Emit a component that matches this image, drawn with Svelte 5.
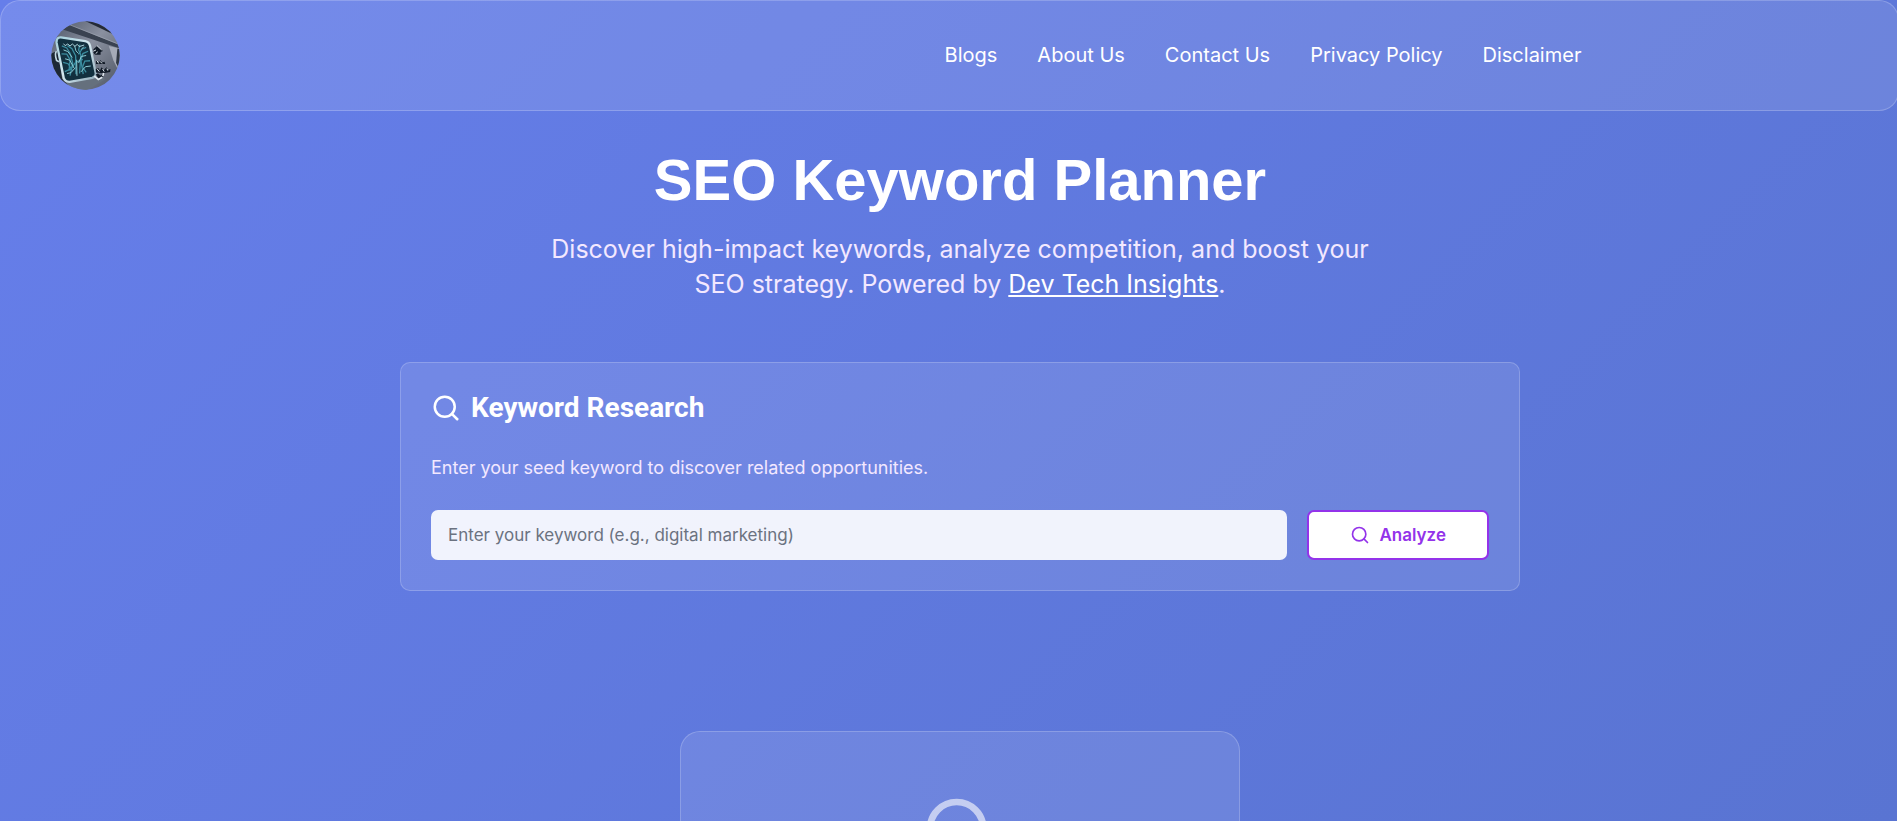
<script lang="ts">
  const navLinks = [
    { label: "Blogs", href: "#blogs" },
    { label: "About Us", href: "#about" },
    { label: "Contact Us", href: "#contact" },
    { label: "Privacy Policy", href: "#privacy" },
    { label: "Disclaimer", href: "#disclaimer" },
  ];

  let keyword = $state("");

  function handleSubmit(event: SubmitEvent) {
    event.preventDefault();
    keyword = keyword.trim();
  }
</script>

{#snippet searchIcon()}
  <svg viewBox="0 0 24 24" aria-hidden="true">
    <circle cx="11" cy="11" r="8" />
    <path d="m21 21-4.3-4.3" />
  </svg>
{/snippet}

<div class="page">
  <header class="site-header">
    <a class="logo" href="#home" aria-label="Home">
      <svg viewBox="0 0 210 210" aria-hidden="true">
        <defs>
          <linearGradient id="wall" x1="0" y1="0" x2="1" y2="1">
            <stop offset="0" stop-color="#4d5667" />
            <stop offset="0.45" stop-color="#8a909f" />
            <stop offset="1" stop-color="#4c5462" />
          </linearGradient>
          <linearGradient id="frame" x1="0" y1="0" x2="1" y2="1">
            <stop offset="0" stop-color="#a5cfdc" />
            <stop offset="0.5" stop-color="#d4e8ef" />
            <stop offset="1" stop-color="#8fa9b8" />
          </linearGradient>
          <clipPath id="round"><circle cx="105" cy="105" r="104" /></clipPath>
        </defs>
        <g clip-path="url(#round)">
          <rect width="210" height="210" fill="url(#wall)" />
          <path d="M36 26 210 84V74L58 12Z" fill="#3a4250" />
          <path d="M58 12 210 72" stroke="#a1a7b3" stroke-width="2" />
          <path d="M104 0 210 50V34L150 0Z" fill="#242b37" />
          <path d="M176 76 210 84V160L190 120Z" fill="#a6abb7" />
          <path d="M202 84 210 86V150L198 128Z" fill="#303844" />
          <path d="M0 100 20 90 34 176 66 210H0Z" fill="#1d2834" />
          <path d="M44 184 132 178 152 158 164 178 110 210H64Z" fill="#65707d" />
          <path
            d="M30 50 104 61Q116 63 119 76L136 158Q138 170 125 173L57 185Q44 186 39 174L17 66Q16 49 30 50Z"
            fill="#12303f"
            stroke="url(#frame)"
            stroke-width="7"
          />
          <path d="M17 92Q10 98 17 120L24 124" fill="none" stroke="#c4d9e2" stroke-width="5" />
          <g fill="none" stroke="#3b8c9f" stroke-width="4">
            <path d="M33 76 48 82 58 98 66 128 58 166M50 75 64 84 75 106 76 162M88 72 84 88 91 104 87 160" />
            <path d="M32 100 48 101 58 118 55 151M37 126 52 130 65 151M113 92 97 99 91 120 98 162" />
            <path d="M107 80 94 86 84 102M119 121 103 122 96 140 107 156M42 154 61 146 75 126 97 117" />
          </g>
          <g fill="none" stroke="#8ccbd4" stroke-width="3">
            <path d="M38 88 51 93 65 111M72 76 76 91 84 99M107 105 92 108 84 128M43 115 57 119 70 143" />
            <path d="M121 137 105 139 91 155M49 160 61 157 74 142M78 118 79 167M100 78 92 87" />
          </g>
          <path
            d="M38 69 43 75 51 70 58 76 65 70 73 77 80 71 86 78 101 73"
            fill="none"
            stroke="#afd4dc"
            stroke-width="3"
          />
          <g fill="#111a26">
            <path d="M129 86 141 75 158 91 151 94V103H134L129 97Z" />
            <path d="M137 120 142 119 145 127 151 119 155 126 163 124 165 131H137Z" />
            <path d="M136 145 144 143 149 151 154 141 161 149 169 141 174 149 181 146 180 155 159 159 137 157Z" />
            <path d="M136 163 146 176 160 168 161 161 150 166 143 160Z" />
          </g>
          <g fill="none" stroke="#e1e8ee" stroke-width="3">
            <path d="M129 92 137 88M140 75 154 88M136 99 142 94M139 119 145 129" />
            <path d="M150 123 155 129M140 145 147 154M157 146 162 154M170 145 173 151" />
            <path d="M132 168 144 178 156 171M160 158 158 168" stroke-width="5" />
          </g>
        </g>
      </svg>
    </a>

    <nav class="nav" aria-label="Main">
      {#each navLinks as link}
        <a href={link.href}>{link.label}</a>
      {/each}
    </nav>
  </header>

  <main class="content">
    <section class="hero">
      <h1>SEO Keyword Planner</h1>
      <p>
        Discover high-impact keywords, analyze competition, and boost your SEO strategy. Powered by
        <a href="#dev-tech-insights">Dev Tech Insights</a>.
      </p>
    </section>

    <section class="card research">
      <h2>{@render searchIcon()}Keyword Research</h2>
      <label for="keyword">Enter your seed keyword to discover related opportunities.</label>
      <form class="search-form" onsubmit={handleSubmit}>
        <input
          id="keyword"
          type="text"
          placeholder="Enter your keyword (e.g., digital marketing)"
          bind:value={keyword}
        />
        <button type="submit">{@render searchIcon()}Analyze</button>
      </form>
    </section>

    <section class="card empty-state" aria-label="Results">
      {@render searchIcon()}
    </section>
  </main>
</div>

<style>
  :global(body) {
    margin: 0;
  }

  .page {
    height: 100vh;
    overflow: hidden;
    background: linear-gradient(135deg, #667eea 0%, #5974d2 100%);
    color: #fff;
    font-family: Inter, "Liberation Sans", sans-serif;
  }

  .page,
  .page * {
    box-sizing: border-box;
  }

  svg {
    display: block;
    flex-shrink: 0;
  }

  a {
    color: inherit;
  }

  /* === Header === */
  .site-header {
    display: flex;
    align-items: center;
    justify-content: space-between;
    width: calc(100% + 2px);
    padding: 20px 50px;
    background: rgba(255, 255, 255, 0.1);
    border: 1px solid rgba(255, 255, 255, 0.2);
    border-radius: 20px;
  }

  .logo,
  .logo svg {
    display: block;
    width: 69px;
    height: 69px;
  }

  .nav {
    display: flex;
    gap: 40px;
    margin-right: 14%;
    padding: 0 15px 2px 0;
    font-size: 20px;
    line-height: 30px;
  }

  .nav a {
    text-decoration: none;
  }

  /* === Hero === */
  .content {
    display: flex;
    flex-direction: column;
    align-items: center;
    padding: 39px 0 0 23px;
  }

  .hero {
    max-width: 840px;
    text-align: center;
  }

  .hero h1 {
    margin: 0 0 22px;
    font-family: "Liberation Sans", Arial, sans-serif;
    font-size: 58px;
    font-weight: 700;
    line-height: 60px;
  }

  .hero p {
    margin: 0;
    color: #f3e8ff;
    font-size: 25px;
    line-height: 35px;
  }

  .hero p a {
    color: #fff;
  }

  /* === Cards === */
  .card {
    width: 100%;
    background: rgba(255, 255, 255, 0.1);
    border: 1px solid rgba(255, 255, 255, 0.2);
  }

  .card svg {
    fill: none;
    stroke: currentColor;
    stroke-width: 2;
    stroke-linecap: round;
    stroke-linejoin: round;
  }

  .research {
    max-width: 1120px;
    margin-top: 60px;
    padding: 30px;
    border-radius: 10px;
  }

  .research h2 {
    display: flex;
    align-items: center;
    gap: 10px;
    margin: 0;
    font-family: Roboto, sans-serif;
    font-size: 28px;
    font-weight: 700;
    line-height: 30px;
  }

  .research h2 svg {
    width: 30px;
    height: 30px;
  }

  .research label {
    display: block;
    margin: 31px 0 28px;
    color: #f3e8ff;
    font-size: 18px;
    line-height: 28px;
  }

  .search-form {
    display: flex;
    gap: 20px;
  }

  .search-form input {
    flex: 1;
    min-width: 0;
    height: 50px;
    padding: 0 17px;
    background: rgba(255, 255, 255, 0.9);
    border: 0;
    border-radius: 7px;
    color: #1f2937;
    font: 400 17px Inter, sans-serif;
  }

  .search-form input::placeholder {
    color: #6b7280;
    opacity: 1;
  }

  .search-form button {
    display: flex;
    align-items: center;
    justify-content: center;
    gap: 10px;
    height: 50px;
    padding: 0 41px;
    background: #fff;
    border: 2px solid #9333ea;
    border-radius: 7px;
    color: #9333ea;
    font: 600 17px Inter, sans-serif;
    cursor: pointer;
  }

  .search-form button svg {
    width: 20px;
    height: 20px;
  }

  .empty-state {
    display: flex;
    justify-content: center;
    max-width: 560px;
    margin-top: 140px;
    padding: 60px;
    border-radius: 20px;
  }

  .empty-state svg {
    width: 80px;
    height: 80px;
    opacity: 0.6;
  }
</style>
